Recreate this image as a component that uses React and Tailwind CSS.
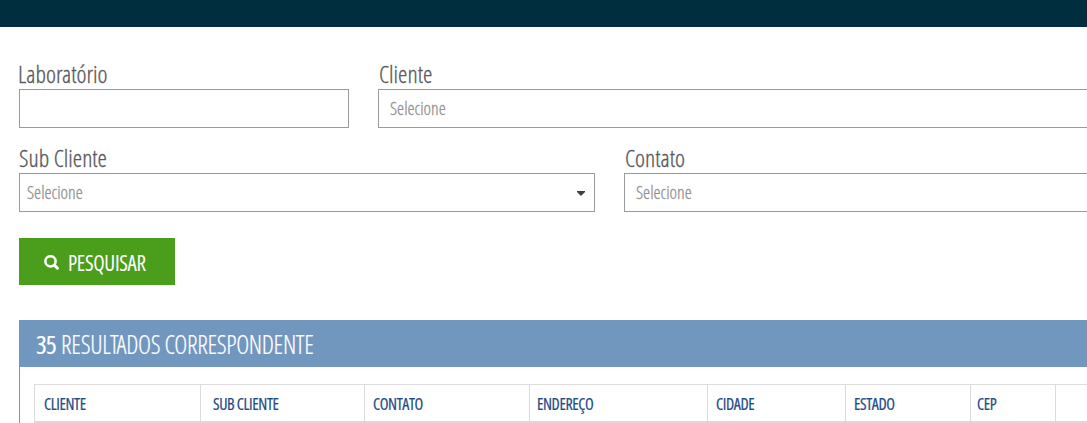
import React from "react";

function T({ children, className }) {
  return <span className={`block whitespace-nowrap ${className}`}>{children}</span>;
}

function Field({ label, value, className, pad, arrow, labelClass = "" }) {
  return (
    <div className={`shrink-0 ${className}`}>
      <div className="h-[29px]">
        <T className={`text-[24px] leading-[28px] text-[#58595b] [-webkit-text-stroke:0.3px_#58595b] ${labelClass}`}>{label}</T>
      </div>
      <div className={`flex h-[39px] items-center justify-between border border-[#9b9b9b] bg-white pr-[9px] ${pad}`}>
        <T className="text-[18px] leading-[37px] text-[#929292] [-webkit-text-stroke:0.3px_#929292]">{value}</T>
        {arrow && (
          <svg width="8" height="5" viewBox="0 0 8 5" className="mt-px">
            <path d="M0 0H8V1L4 5L0 1Z" fill="#404040" />
          </svg>
        )}
      </div>
    </div>
  );
}

const columns = [
  { name: "CLIENTE", cls: "w-[166px] pl-[9px]" },
  { name: "SUB CLIENTE", cls: "w-[164px] pl-[12px]" },
  { name: "CONTATO", cls: "w-[165px] pl-[8px]" },
  { name: "ENDEREÇO", cls: "w-[178px] pl-[7px]" },
  { name: "CIDADE", cls: "w-[138px] pl-[8px]" },
  { name: "ESTADO", cls: "w-[125px] pl-[8px]" },
  { name: "CEP", cls: "w-[85px] pl-[6px]" },
  { name: "", cls: "w-[120px]" },
];

export default function App() {
  return (
    <div className="h-[423px] w-full overflow-hidden bg-white font-['Open_Sans_Condensed_Light','Open_Sans',sans-serif] font-light font-stretch-condensed">
      <header className="h-[27px] bg-[#002e3e]" />
      <main className="pl-[19px] pt-[33px]">
        <div className="flex gap-[29px]">
          <Field label="Laboratório" className="w-[330px]" pad="" labelClass="-ml-px" />
          <Field label="Cliente" value="Selecione" className="w-[760px]" pad="pl-[11px]" labelClass="ml-px" />
        </div>
        <div className="mt-[16px] flex gap-[29px]">
          <Field label="Sub Cliente" value="Selecione" className="w-[576px]" pad="pl-[7px]" arrow />
          <Field label="Contato" value="Selecione" className="w-[514px]" pad="pl-[11px]" labelClass="ml-px" />
        </div>
        <button className="mt-[26px] flex h-[47px] w-[156px] items-center bg-[#4b9d1c] pl-[25px] text-white">
          <svg width="15" height="15" viewBox="0 0 15 15" fill="none" stroke="currentColor" className="mt-[2px]">
            <circle cx="6.5" cy="6.3" r="5.1" strokeWidth="2.5" />
            <path d="M10.3 10.1L13.4 13.2" strokeWidth="3" strokeLinecap="round" />
          </svg>
          <T className="ml-[9px] mt-[3px] font-['Open_Sans',sans-serif] text-[21px] font-normal leading-[28px] tracking-[-0.33px]">PESQUISAR</T>
        </button>
        <section className="mt-[35px] h-[120px] w-[1200px] border-l border-[#7197bf]">
          <div className="-ml-px flex h-[47px] items-center gap-[5px] bg-[#7197bf] pl-[17px] pt-px text-[25px] leading-[46px] text-white">
            <T className="font-['Open_Sans',sans-serif] font-normal tracking-[-0.6px] [-webkit-text-stroke:0.2px_#fff]">35</T>
            <T className="tracking-[-0.34px] [-webkit-text-stroke:0.2px_#fff]">RESULTADOS CORRESPONDENTE</T>
          </div>
          <div className="ml-[14px] mt-[17px] flex h-[39px] border-b-2 border-t border-b-[#d9d9d9] border-t-[#dedede]">
            {columns.map((c, i) => (
              <div key={i} className={`shrink-0 border-l border-[#dadada] ${c.cls}`}>
                <T className="pt-px font-['Open_Sans',sans-serif] text-[16px] font-normal leading-[36px] tracking-[-0.38px] text-[#1f4b84] [-webkit-text-stroke:0.2px_#1f4b84]">{c.name}</T>
              </div>
            ))}
          </div>
        </section>
      </main>
    </div>
  );
}
